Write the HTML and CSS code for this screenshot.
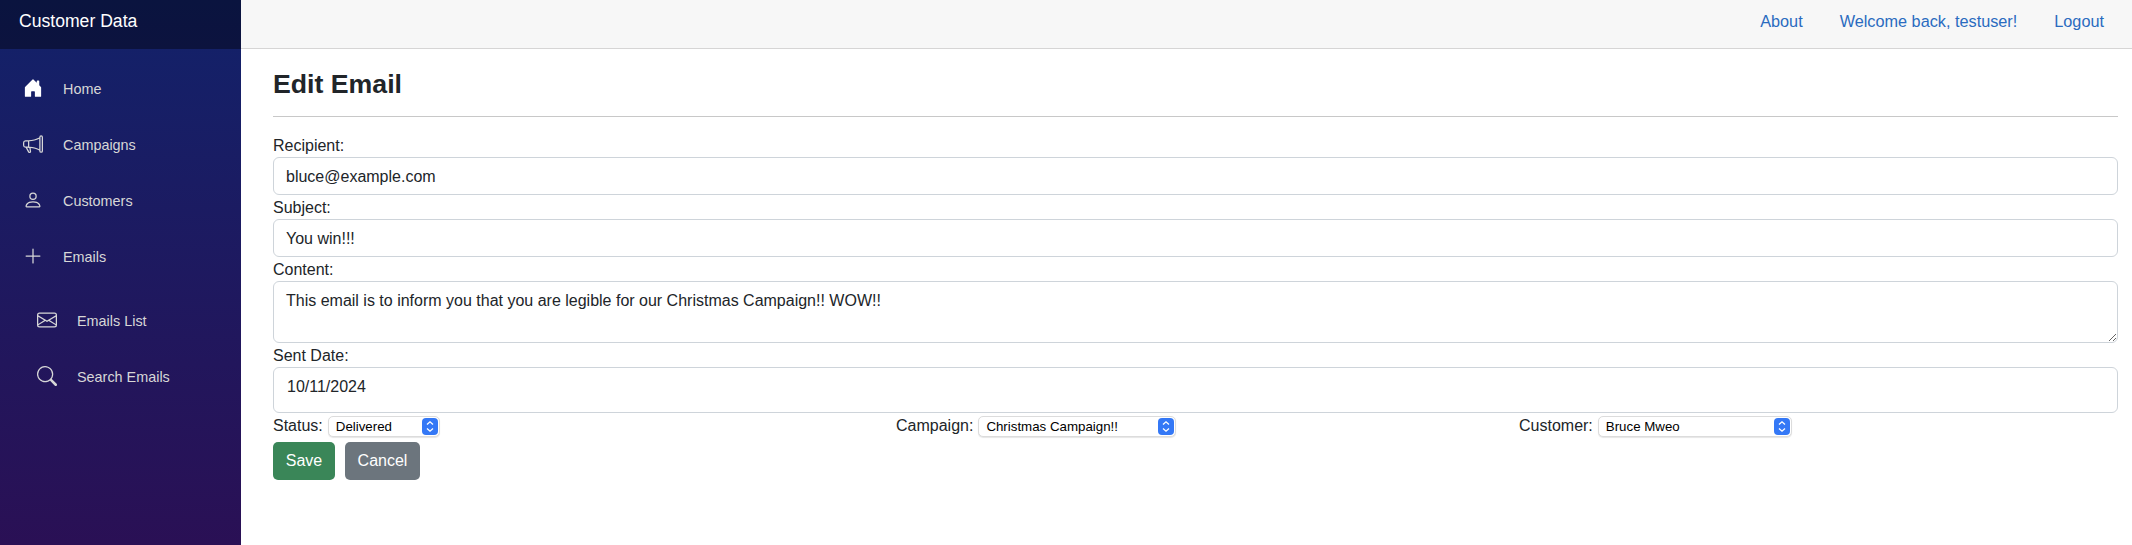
FILE: index.html
```html
<!DOCTYPE html>
<html lang="en">
<head>
  <meta charset="UTF-8" />
  <meta name="viewport" content="width=device-width, initial-scale=1.0" />
  <title>Edit Email</title>
  <link rel="stylesheet" href="styles.css">
</head>
<body>
  <aside class="sidebar">
    <div class="brand">Customer Data</div>
    <nav class="side-nav">
      <a class="nav-link" href="#">
        <svg class="icon" viewBox="0 0 16 16" fill="currentColor"><path class="home-icon" d="M6.5 14.5v-3.505c0-.245.25-.495.5-.495h2c.25 0 .5.25.5.5v3.5a.5.5 0 0 0 .5.5h4a.5.5 0 0 0 .5-.5v-7a.5.5 0 0 0-.146-.354L13 5.793V2.5a.5.5 0 0 0-.5-.5h-1a.5.5 0 0 0-.5.5v1.293L8.354 1.146a.5.5 0 0 0-.708 0l-6 6A.5.5 0 0 0 1.5 7.5v7a.5.5 0 0 0 .5.5h4a.5.5 0 0 0 .5-.5Z"/></svg>
        Home
      </a>
      <a class="nav-link" href="#">
        <svg class="icon" viewBox="0 0 16 16" fill="currentColor"><path d="M13 2.5a1.5 1.5 0 0 1 3 0v11a1.5 1.5 0 0 1-3 0v-.214c-2.162-1.241-4.49-1.843-6.912-2.083l.405 2.712A1 1 0 0 1 5.51 15.1h-.548a1 1 0 0 1-.916-.599l-1.85-3.49a68.14 68.14 0 0 0-.202-.003A2.014 2.014 0 0 1 0 9V7a2.02 2.02 0 0 1 1.992-2.013 74.663 74.663 0 0 0 2.483-.075c3.043-.154 6.148-.849 8.525-2.199V2.5zm1 0v11a.5.5 0 0 0 1 0v-11a.5.5 0 0 0-1 0zm-1 1.35c-2.344 1.205-5.209 1.842-8 2.033v4.233c.18.01.359.022.537.036 2.568.189 5.093.744 7.463 1.993V3.85zm-9 6.215v-4.13a95.09 95.09 0 0 1-1.992.052A1.02 1.02 0 0 0 1 7v2c0 .55.448 1.002 1.006 1.009A60.49 60.49 0 0 1 4 10.065zm-.657.975 1.609 3.037.01.024h.548l-.002-.014-.443-2.966a68.019 68.019 0 0 0-1.722-.082z"/></svg>
        Campaigns
      </a>
      <a class="nav-link" href="#">
        <svg class="icon" viewBox="0 0 16 16" fill="currentColor"><path d="M8 8a3 3 0 1 0 0-6 3 3 0 0 0 0 6Zm2-3a2 2 0 1 1-4 0 2 2 0 0 1 4 0Zm4 8c0 1-1 1-1 1H3s-1 0-1-1 1-4 6-4 6 3 6 4Zm-1-.004c-.001-.246-.154-.986-.832-1.664C11.516 10.68 10.289 10 8 10c-2.29 0-3.516.68-4.168 1.332-.678.678-.83 1.418-.832 1.664h10Z"/></svg>
        Customers
      </a>
      <a class="nav-link" href="#">
        <svg class="icon" viewBox="0 0 16 16" fill="currentColor"><path d="M8 2a.5.5 0 0 1 .5.5v5h5a.5.5 0 0 1 0 1h-5v5a.5.5 0 0 1-1 0v-5h-5a.5.5 0 0 1 0-1h5v-5A.5.5 0 0 1 8 2Z"/></svg>
        Emails
      </a>
      <div class="sub-nav">
        <a class="nav-link" href="#">
          <svg class="icon" viewBox="0 0 16 16" fill="currentColor"><path d="M0 4a2 2 0 0 1 2-2h12a2 2 0 0 1 2 2v8a2 2 0 0 1-2 2H2a2 2 0 0 1-2-2V4Zm2-1a1 1 0 0 0-1 1v.217l7 4.2 7-4.2V4a1 1 0 0 0-1-1H2Zm13 2.383-4.708 2.825L15 11.105V5.383Zm-.034 6.876-5.64-3.471L8 9.583l-1.326-.795-5.64 3.47A1 1 0 0 0 2 13h12a1 1 0 0 0 .966-.741ZM1 11.105l4.708-2.897L1 5.383v5.722Z"/></svg>
          Emails List
        </a>
        <a class="nav-link" href="#">
          <svg class="icon" viewBox="0 0 16 16" fill="currentColor"><path d="M11.742 10.344a6.5 6.5 0 1 0-1.397 1.398h-.001c.03.04.062.078.098.115l3.85 3.85a1 1 0 0 0 1.415-1.414l-3.85-3.85a1.007 1.007 0 0 0-.115-.1zM12 6.5a5.5 5.5 0 1 1-11 0 5.5 5.5 0 0 1 11 0z"/></svg>
          Search Emails
        </a>
      </div>
    </nav>
  </aside>

  <div class="page">
    <header class="top-bar">
      <a href="#">About</a>
      <a href="#">Welcome back, testuser!</a>
      <a href="#">Logout</a>
    </header>

    <main class="content">
      <h1>Edit Email</h1>
      <hr>
      <form>
        <label class="field-label" for="recipient">Recipient:</label>
        <input class="form-control" id="recipient" type="text" value="bluce@example.com">

        <label class="field-label" for="subject">Subject:</label>
        <input class="form-control" id="subject" type="text" value="You win!!!">

        <label class="field-label" for="body">Content:</label>
        <textarea class="form-control" id="body" rows="2">This email is to inform you that you are legible for our Christmas Campaign!! WOW!!</textarea>

        <label class="field-label" for="sent">Sent Date:</label>
        <input class="form-control date-control" id="sent" type="text" value="10/11/2024">

        <div class="select-row">
          <div class="select-col">
            <label for="status">Status:</label>
            <span class="select-wrap status-select">
              <select id="status"><option>Delivered</option></select>
              <svg class="select-arrows" viewBox="0 0 16 17"><rect width="16" height="17" rx="4" fill="#3478f6"/><path d="M5 6.5 8 3.8l3 2.7M5 10.5l3 2.7 3-2.7" fill="none" stroke="#fff" stroke-width="1.3"/></svg>
            </span>
          </div>
          <div class="select-col">
            <label for="campaign">Campaign:</label>
            <span class="select-wrap campaign-select">
              <select id="campaign"><option>Christmas Campaign!!</option></select>
              <svg class="select-arrows" viewBox="0 0 16 17"><rect width="16" height="17" rx="4" fill="#3478f6"/><path d="M5 6.5 8 3.8l3 2.7M5 10.5l3 2.7 3-2.7" fill="none" stroke="#fff" stroke-width="1.3"/></svg>
            </span>
          </div>
          <div class="select-col">
            <label for="customer">Customer:</label>
            <span class="select-wrap customer-select">
              <select id="customer"><option>Bruce Mweo</option></select>
              <svg class="select-arrows" viewBox="0 0 16 17"><rect width="16" height="17" rx="4" fill="#3478f6"/><path d="M5 6.5 8 3.8l3 2.7M5 10.5l3 2.7 3-2.7" fill="none" stroke="#fff" stroke-width="1.3"/></svg>
            </span>
          </div>
        </div>

        <div class="actions">
          <button class="btn btn-save" type="submit">Save</button>
          <button class="btn btn-cancel" type="button">Cancel</button>
        </div>
      </form>
    </main>
  </div>
</body>
</html>
```

FILE: styles.css
```css
* {
  box-sizing: border-box;
  font-family: 'Liberation Sans', Arial, sans-serif;
}
body {
  margin: 0;
  display: flex;
  min-height: 100vh;
  background: #fff;
  color: #212529;
  font-size: 16px;
  line-height: 24px;
}
.sidebar {
  width: 241px;
  flex-shrink: 0;
  background: linear-gradient(180deg, #12226a 0, #2a1055 545px);
}
.brand {
  height: 49px;
  padding: 9px 0 0 19px;
  background: rgba(0, 0, 0, 0.4);
  color: #fff;
  font-size: 17.6px;
}
.side-nav {
  display: flex;
  flex-direction: column;
  gap: 8px;
  padding-top: 15px;
}
.nav-link {
  display: flex;
  align-items: center;
  height: 48px;
  padding: 1px 0 0 23px;
  color: #d7d7d7;
  font-size: 14.4px;
  text-decoration: none;
}
.icon {
  width: 20px;
  height: 20px;
  margin-top: -1px;
  margin-right: 20px;
  flex-shrink: 0;
}
.nav-link:first-child .icon {
  color: #fff;
}
.sub-nav .nav-link:first-child .icon {
  color: #d7d7d7;
}
.sub-nav {
  display: flex;
  flex-direction: column;
  gap: 8px;
  padding: 8px 0 0 14px;
}
.page {
  flex: 1;
  min-width: 0;
}
.top-bar {
  display: flex;
  justify-content: flex-end;
  gap: 37px;
  height: 49px;
  padding: 9px 28px 0 0;
  background: #f7f7f7;
  border-bottom: 1px solid #d6d5d5;
  font-size: 16.25px;
}
.top-bar a {
  color: #2a6bbf;
  text-decoration: none;
}
.content {
  padding: 20px 14px 0 32px;
}
h1 {
  margin: 0 0 16px;
  font-size: 26.7px;
  line-height: 31px;
  font-weight: 700;
}
hr {
  height: 1px;
  margin: 0 0 16px;
  border: 0;
  background: #c8c8c8;
}
.field-label {
  display: block;
  height: 24px;
  padding-top: 1px;
}
.form-control {
  display: block;
  width: 100%;
  padding: 7px 12px 5px;
  border: 1px solid #ced4da;
  border-radius: 6px;
  background: #fff;
  color: #212529;
  font-size: 16px;
  line-height: 24px;
}
.date-control {
  height: 46px;
  padding: 6px 13px 13px;
}
.select-row {
  display: grid;
  grid-template-columns: repeat(3, 1fr);
  gap: 24px;
  margin-top: 1px;
}
.select-col {
  display: flex;
  align-items: center;
  gap: 5px;
}
.select-wrap {
  position: relative;
  display: block;
  height: 21px;
}
.select-wrap select {
  display: block;
  width: 100%;
  height: 21px;
  padding: 0 20px 0 7px;
  appearance: none;
  border: 1px solid #dcdcdc;
  border-radius: 5px;
  background: #fff;
  box-shadow: 0 1px 1px rgba(0, 0, 0, 0.1);
  color: #000;
  font-size: 13.3px;
}
.select-arrows {
  position: absolute;
  top: 2px;
  right: 2px;
  width: 16px;
  height: 17px;
}
.status-select { width: 112px; }
.campaign-select { width: 198px; }
.customer-select { width: 194px; }
.actions {
  display: flex;
  gap: 10px;
  margin-top: 4px;
}
.btn {
  height: 38px;
  padding: 0 11px;
  border: 1px solid transparent;
  border-radius: 5px;
  color: #fff;
  font-size: 16px;
}
.btn-save {
  width: 62px;
  background: #3a8658;
}
.btn-cancel {
  width: 75px;
  background: #6c757d;
}
```
